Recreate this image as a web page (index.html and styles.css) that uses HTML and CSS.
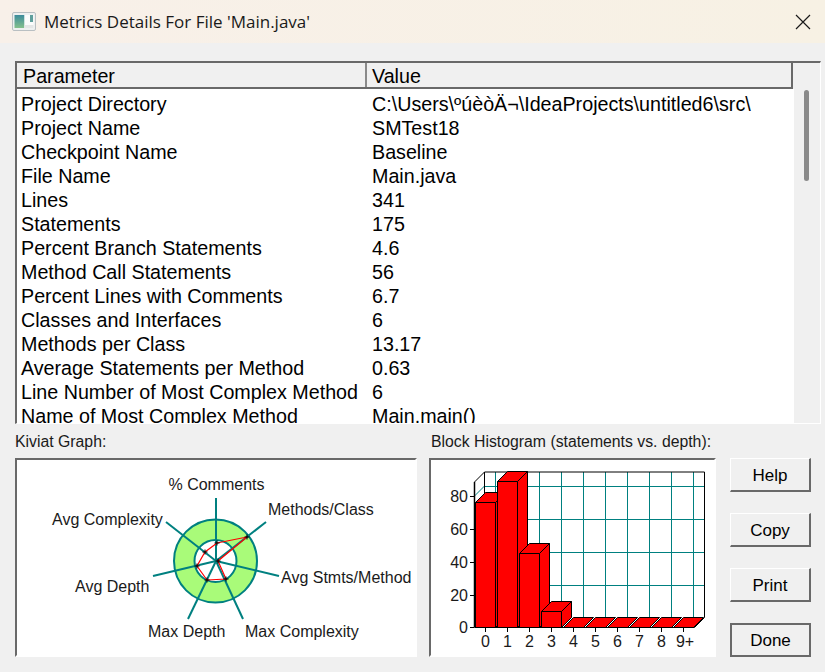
FILE: index.html
```html
<!DOCTYPE html>
<html lang="en">
<head>
<meta charset="utf-8">
<title>Metrics Details For File 'Main.java'</title>
<link rel="stylesheet" href="styles.css">
</head>
<body>
<div class="dialog">
  <header class="titlebar">
    <svg class="app-icon" width="24" height="19" viewBox="0 0 24 19">
      <defs><linearGradient id="ig" x1="0" y1="0" x2="0" y2="1"><stop offset="0" stop-color="#3d8c9c"/><stop offset="1" stop-color="#84c08c"/></linearGradient></defs>
      <rect x="0.5" y="0.5" width="23" height="18" rx="1.500" fill="#eef0f0" stroke="#b9bfc2"/>
      <rect x="2.500" y="3" width="10" height="13" fill="url(#ig)"/>
      <rect x="12.500" y="3" width="9" height="13" fill="#fbfcfc"/>
      <rect x="18" y="3" width="3" height="7" fill="#5f9f9c"/>
      <rect x="12.500" y="13" width="9" height="3" fill="#e4e6e6"/>
    </svg>
    <span class="title-text">Metrics Details For File 'Main.java'</span>
    <svg class="close-icon" width="16" height="16" viewBox="0 0 16 16"><path d="M1 1L15 15M15 1L1 15" stroke="#1a1a1a" stroke-width="1.2" fill="none"/></svg>
  </header>
  <main class="content">
    <section class="listbox">
      <div class="list-head">
        <div class="head-cell head-param">Parameter</div>
        <div class="head-cell head-value">Value</div>
      </div>
      <div class="list-main">
        <div class="rows">
          <div class="row"><span class="cell-param">Project Directory</span><span>C:\Users\ºúèòÄ¬\IdeaProjects\untitled6\src\</span></div>
          <div class="row"><span class="cell-param">Project Name</span><span>SMTest18</span></div>
          <div class="row"><span class="cell-param">Checkpoint Name</span><span>Baseline</span></div>
          <div class="row"><span class="cell-param">File Name</span><span>Main.java</span></div>
          <div class="row"><span class="cell-param">Lines</span><span>341</span></div>
          <div class="row"><span class="cell-param">Statements</span><span>175</span></div>
          <div class="row"><span class="cell-param">Percent Branch Statements</span><span>4.6</span></div>
          <div class="row"><span class="cell-param">Method Call Statements</span><span>56</span></div>
          <div class="row"><span class="cell-param">Percent Lines with Comments</span><span>6.7</span></div>
          <div class="row"><span class="cell-param">Classes and Interfaces</span><span>6</span></div>
          <div class="row"><span class="cell-param">Methods per Class</span><span>13.17</span></div>
          <div class="row"><span class="cell-param">Average Statements per Method</span><span>0.63</span></div>
          <div class="row"><span class="cell-param">Line Number of Most Complex Method</span><span>6</span></div>
          <div class="row"><span class="cell-param">Name of Most Complex Method</span><span>Main.main()</span></div>
        </div>
      </div>
      <div class="scrollbar"><div class="thumb"></div></div>
    </section>
    <section class="bottom">
      <div class="panel panel-kiviat">
        <div class="panel-label">Kiviat Graph:</div>
        <div class="graph">
          <svg class="chart" width="398" height="195" viewBox="17 460 398 195">
            <circle cx="215.5" cy="561" r="41.500" fill="#a9fb79" stroke="#008080" stroke-width="2"/>
            <circle cx="215.5" cy="561" r="21" fill="#fff" stroke="#008080" stroke-width="2"/>
            <g stroke="#008080" stroke-width="2" fill="none">
              <path d="M216 561L216 498"/>
              <path d="M216 561L266 522"/>
              <path d="M216 561L279 576"/>
              <path d="M216 561L243 619"/>
              <path d="M216 561L188 619"/>
              <path d="M216 561L153 576"/>
              <path d="M216 561L166 522"/>
            </g>
            <path d="M217 543L247 537L218 561L226 579L207 580L197 566L205 552Z" fill="none" stroke="#f00" stroke-width="1.200"/>
            <g class="markers">
              <path d="M214.500 543h5M217 540.500v5"/><path d="M244.500 537h5M247 534.500v5"/><path d="M215.500 561h5M218 558.500v5"/><path d="M223.500 579h5M226 576.500v5"/><path d="M204.500 580h5M207 577.500v5"/><path d="M194.500 566h5M197 563.500v5"/><path d="M202.500 552h5M205 549.500v5"/>
            </g>
            <g class="chart-text">
              <text x="216.500" y="490" text-anchor="middle">% Comments</text>
              <text x="268" y="515">Methods/Class</text>
              <text x="281" y="583">Avg Stmts/Method</text>
              <text x="245" y="637">Max Complexity</text>
              <text x="148" y="637">Max Depth</text>
              <text x="75" y="592">Avg Depth</text>
              <text x="52" y="525">Avg Complexity</text>
            </g>
          </svg>
        </div>
      </div>
      <div class="panel panel-hist">
        <div class="panel-label panel-label-hist">Block Histogram (statements vs. depth):</div>
        <div class="graph">
          <svg class="chart" width="284" height="195" viewBox="431 460 284 195">
            <g stroke="#008080" stroke-width="1" fill="none" shape-rendering="crispEdges">
              <path d="M484 486.500H704M484 519.500H704M484 552.500H704M484 585.500H704"/>
              <path d="M495.500 472V617M517.500 472V617M539.500 472V617M561.500 472V617M583.500 472V617M605.500 472V617M627.500 472V617M649.500 472V617M671.500 472V617M693.500 472V617"/>
            </g>
            <path d="M484.500 486L474.500 496" stroke="#008080" fill="none"/>
            <path d="M474.500 627V482L484.500 472H704.500V617.500L694.500 627.500" fill="none" stroke="#000"/>
            <path d="M484.500 472V617.500" stroke="#000" fill="none"/>
            <g class="bars">
              <path class="bar" d="M475.500 502.500H495.500V627.500H475.500Z"/><path class="bar" d="M475.500 502.500L485.500 492.500H505.500L495.500 502.500Z"/><path class="bar" d="M495.500 502.500L505.500 492.500V617.500L495.500 627.500Z"/>
              <path class="bar" d="M497.500 481.500H517.500V627.500H497.500Z"/><path class="bar" d="M497.500 481.500L507.500 471.500H527.500L517.500 481.500Z"/><path class="bar" d="M517.500 481.500L527.500 471.500V617.500L517.500 627.500Z"/>
              <path class="bar" d="M519.500 553.500H539.500V627.500H519.500Z"/><path class="bar" d="M519.500 553.500L529.500 543.500H549.500L539.500 553.500Z"/><path class="bar" d="M539.500 553.500L549.500 543.500V617.500L539.500 627.500Z"/>
              <path class="bar" d="M541.500 611.500H561.500V627.500H541.500Z"/><path class="bar" d="M541.500 611.500L551.500 601.500H571.500L561.500 611.500Z"/><path class="bar" d="M561.500 611.500L571.500 601.500V617.500L561.500 627.500Z"/>
            </g>
            <g class="flat">
              <path d="M563.500 627.500L573.500 617.500H593.500L583.500 627.500Z"/>
              <path d="M585.500 627.500L595.500 617.500H615.500L605.500 627.500Z"/>
              <path d="M607.500 627.500L617.500 617.500H637.500L627.500 627.500Z"/>
              <path d="M629.500 627.500L639.500 617.500H659.500L649.500 627.500Z"/>
              <path d="M651.500 627.500L661.500 617.500H681.500L671.500 627.500Z"/>
              <path d="M673.500 627.500L683.500 617.500H703.500L693.500 627.500Z"/>
            </g>
            <path d="M474.500 627.500H694.500" stroke="#000" fill="none"/>
            <path d="M474.500 627.500V482" stroke="#000" stroke-width="1.500" fill="none"/>
            <path d="M485.500 627V632M507.500 627V632M529.500 627V632M551.500 627V632M573.500 627V632M595.500 627V632M617.500 627V632M639.500 627V632M661.500 627V632M683.500 627V632M474 627.500H470M474 595.500H470M474 562.500H470M474 529.500H470M474 496.500H470" stroke="#000" fill="none"/>
            <g class="chart-text">
              <text class="y" x="468" y="502">80</text>
              <text class="y" x="468" y="535">60</text>
              <text class="y" x="468" y="568">40</text>
              <text class="y" x="468" y="601">20</text>
              <text class="y" x="468" y="633">0</text>
              <text class="x" x="485.500" y="647">0</text>
              <text class="x" x="507.500" y="647">1</text>
              <text class="x" x="529.500" y="647">2</text>
              <text class="x" x="551.500" y="647">3</text>
              <text class="x" x="573.500" y="647">4</text>
              <text class="x" x="595.500" y="647">5</text>
              <text class="x" x="617.500" y="647">6</text>
              <text class="x" x="639.500" y="647">7</text>
              <text class="x" x="661.500" y="647">8</text>
              <text class="x" x="685" y="647">9+</text>
            </g>
          </svg>
        </div>
      </div>
      <div class="buttons">
        <button class="btn" type="button">Help</button>
        <button class="btn" type="button">Copy</button>
        <button class="btn" type="button">Print</button>
        <button class="btn btn-default" type="button">Done</button>
      </div>
    </section>
  </main>
</div>
</body>
</html>
```
FILE: styles.css
```css
* { box-sizing: border-box; }
html, body { margin: 0; padding: 0; }
body {
  width: 825px;
  height: 672px;
  overflow: hidden;
  background: #f0f0f0;
  color: #000;
  font-family: "Liberation Sans", Arial, sans-serif;
}
.dialog { display: flex; flex-direction: column; height: 672px; }
.titlebar {
  height: 43px;
  display: flex;
  align-items: center;
  padding: 0 14px 0 12px;
  background: linear-gradient(90deg, #f8f0e9, #f7f1e4);
}
.app-icon { flex: none; margin-right: 8px; }
.title-text { flex: 1; font-family: "Open Sans", "Liberation Sans", sans-serif; font-size: 17px; color: #1a1a1a; }
.close-icon { flex: none; }
.content { flex: 1; display: flex; flex-direction: column; padding: 18px 4px 0 15px; }
.listbox {
  position: relative;
  height: 363px;
  display: flex;
  flex-direction: column;
  border-top: 2px solid #696969;
  border-left: 2px solid #696969;
  border-right: 1px solid #fff;
  border-bottom: 1px solid #fff;
  overflow: hidden;
  flex: none;
  width: 806px;
}
.list-head {
  flex: none;
  display: flex;
  height: 26px;
  width: 776px;
  font-size: 19.7px;
  border-bottom: 2px solid #696969;
  border-right: 2px solid #696969;
}
.head-cell { line-height: 27px; padding-left: 6px; }
.head-param { width: 350px; border-right: 2px solid #8a8a8a; }
.head-value { flex: 1; padding-left: 5px; }
.list-main { flex: 1; width: 777px; background: #fff; overflow: hidden; padding-top: 3px; }
.row { display: flex; height: 24px; line-height: 24px; font-size: 19.7px; padding-left: 4px; white-space: nowrap; }
.cell-param { width: 351px; flex: none; }
.scrollbar { position: absolute; top: 0; right: 0; bottom: 0; width: 26px; background: #f0f0f0; }
.thumb { position: absolute; top: 27px; left: 10px; width: 5px; height: 91px; border-radius: 3px; background: #8a8a8a; }
.bottom { display: flex; flex: none; margin-top: 6px; }
.panel { display: flex; flex-direction: column; }
.panel-kiviat { width: 402px; margin-right: 12px; }
.panel-hist { width: 287px; margin-right: 14px; }
.panel-label { height: 28px; line-height: 24px; font-size: 15.8px; color: #1a1a1a; white-space: nowrap; }
.panel-label-hist { padding-left: 2px; }
.graph {
  height: 199px;
  background: #fff;
  border-top: 2px solid #696969;
  border-left: 2px solid #696969;
  border-right: 2px solid #fff;
  border-bottom: 2px solid #fff;
}
.chart { display: block; }
.chart-text text { font-size: 16px; fill: #1a1a1a; }
.chart-text .y { text-anchor: end; font-size: 16px; }
.chart-text .x { text-anchor: middle; font-size: 16px; }
.markers path { stroke: #000; stroke-width: 1; fill: none; }
.bar { fill: #f00; stroke: #000; stroke-width: 1; }
.flat path { fill: #f00; stroke: #000; stroke-width: 1; }
.buttons { display: flex; flex-direction: column; gap: 21px; padding-top: 28px; }
.btn {
  width: 81px;
  height: 34px;
  padding: 2px 0 0;
  background: #f0f0f0;
  font: 17px "Liberation Sans", Arial, sans-serif;
  color: #000;
  border-style: solid;
  border-width: 1px 2px 2px 1px;
  border-color: #fff #696969 #696969 #fff;
}
.btn-default { border-width: 2px; border-color: #696969; }
```
